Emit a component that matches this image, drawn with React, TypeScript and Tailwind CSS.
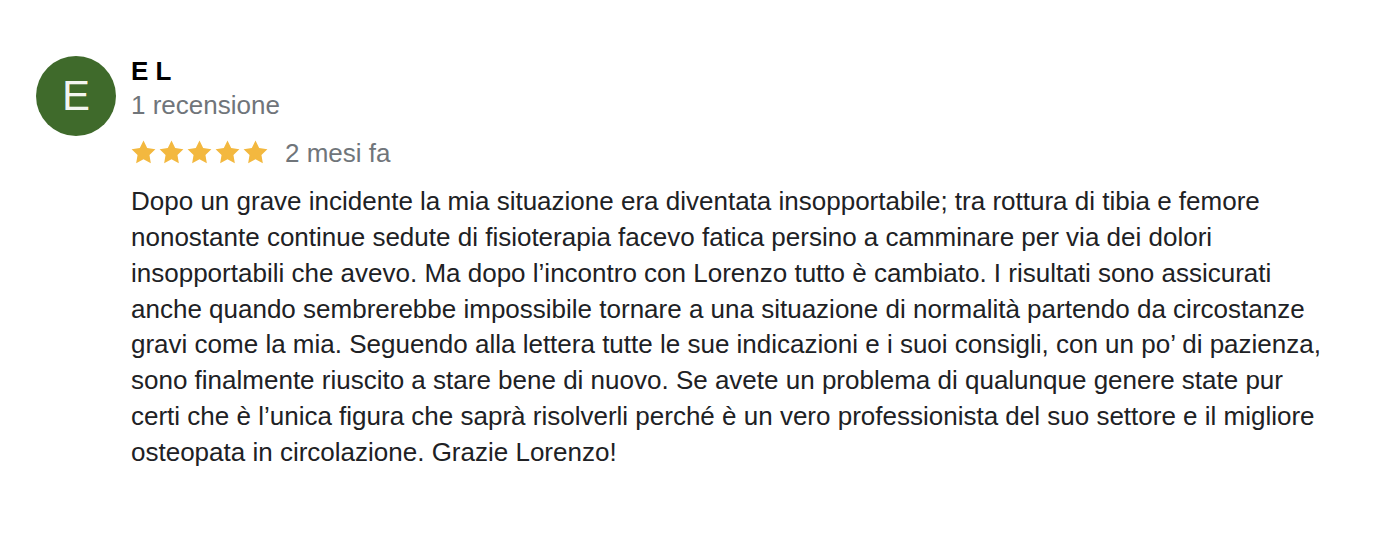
import React from 'react';

const review = {
  initial: 'E',
  name: 'E L',
  count: '1 recensione',
  rating: 5,
  when: '2 mesi fa',
  text:
    'Dopo un grave incidente la mia situazione era diventata insopportabile; tra rottura di tibia e femore nonostante continue sedute di fisioterapia facevo fatica persino a camminare per via dei dolori insopportabili che avevo. Ma dopo l’incontro con Lorenzo tutto è cambiato. I risultati sono assicurati anche quando sembrerebbe impossibile tornare a una situazione di normalità partendo da circostanze gravi come la mia. Seguendo alla lettera tutte le sue indicazioni e i suoi consigli, con un po’ di pazienza, sono finalmente riuscito a stare bene di nuovo. Se avete un problema di qualunque genere state pur certi che è l’unica figura che saprà risolverli perché è un vero professionista del suo settore e il migliore osteopata in circolazione. Grazie Lorenzo!',
};

function Star() {
  return (
    <svg width="25" height="24" viewBox="0 0 24 22.6" className="shrink-0">
      <polygon
        points="12,0.3 15.53,7.45 23.41,8.59 17.71,14.15 19.05,22.01 12,18.3 4.95,22.01 6.29,14.15 0.59,8.59 8.47,7.45"
        fill="#f3b83f"
      />
    </svg>
  );
}

export default function App() {
  return (
    <div className="min-h-[534px] bg-white font-['Liberation_Sans',Arial,sans-serif]">
      <div className="flex gap-[15px] pl-9 pt-14">
        {/* Avatar */}
        <div className="flex h-20 w-20 shrink-0 items-center justify-center rounded-full bg-[#3f6a2b] text-[42px] font-light leading-none text-white/95">
          {review.initial}
        </div>

        <div className="w-[1195px]">
          <div className="text-[26px] font-bold leading-[30px] text-black">{review.name}</div>
          <div className="mt-[2px] text-[26px] leading-[34px] text-[#70757a]">{review.count}</div>

          <div className="mt-[14px] flex h-[34px] items-center">
            <div className="flex gap-[3px] pb-[3px]">
              {Array.from({ length: review.rating }).map((_, i) => (
                <Star key={i} />
              ))}
            </div>
            <span className="ml-[17px] text-[26px] leading-[34px] text-[#70757a]">{review.when}</span>
          </div>

          <p className="mt-[14px] text-[26px] leading-[35.85px] text-[#202124]">{review.text}</p>
        </div>
      </div>
    </div>
  );
}
